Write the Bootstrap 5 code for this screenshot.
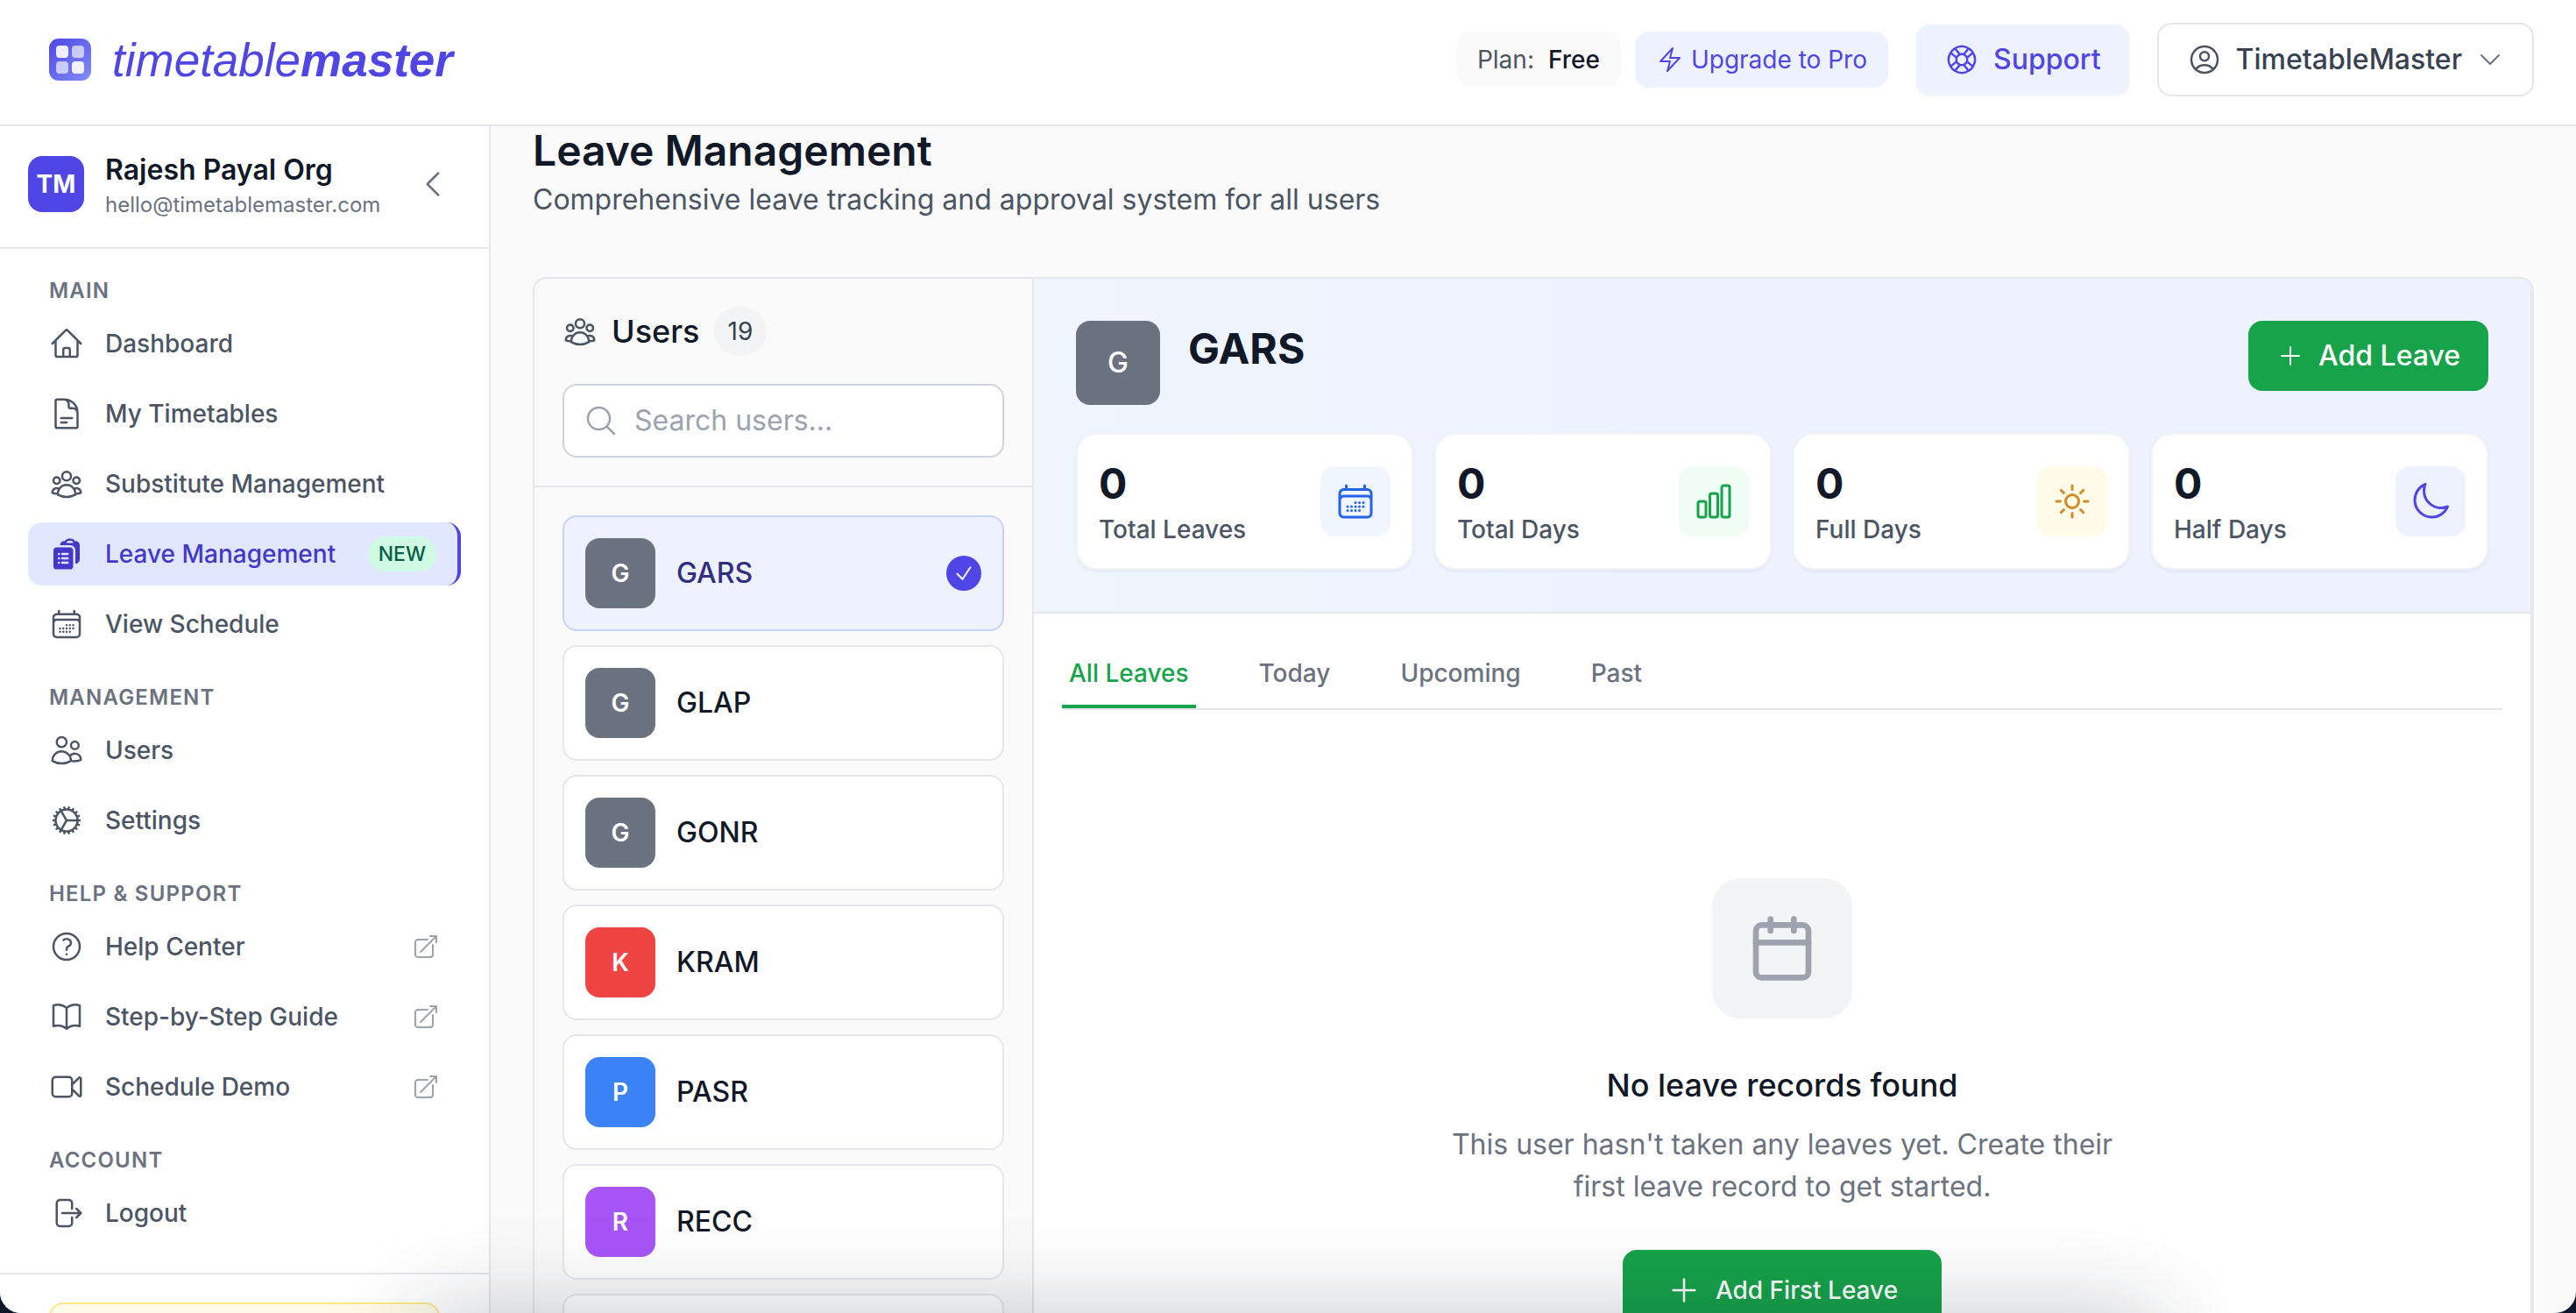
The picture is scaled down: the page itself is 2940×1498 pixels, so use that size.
<!DOCTYPE html>
<html lang="en">
<head>
<meta charset="utf-8">
<meta name="viewport" content="width=device-width, initial-scale=1">
<title>Leave Management - TimetableMaster</title>
<link href="https://cdn.jsdelivr.net/npm/bootstrap@5.3.0/dist/css/bootstrap.min.css" rel="stylesheet">
<style>
  :root { --line: #e5e7eb; --ink: #111827; --slate: #4b5563; --muted: #6b7280; --indigo: #4f46e5; --indigo-soft: #eef2ff; --leaf: #16a34a; }
  body { font-family: Inter, "Liberation Sans", sans-serif; font-size: 28px; line-height: 40px; color: var(--ink); background: #0f172a; }
  h1, h2, h3, p { margin: 0; }
  a { text-decoration: none; color: inherit; }
  button { font: inherit; }
  .ico { fill: none; stroke: currentColor; stroke-width: 1.5; stroke-linecap: round; stroke-linejoin: round; width: 40px; height: 40px; flex: none; }
  .ico-sm { width: 32px; height: 32px; }
  .ico-lg { width: 48px; height: 48px; }
  .ico-xl { width: 80px; height: 80px; stroke-width: 2; }
  .ico-xs { width: 24px; height: 24px; stroke-width: 2; }
  .ico-full { fill: currentColor; stroke: none; }
  .text-lg { font-size: 32px; line-height: 48px; }
  .text-xl { font-size: 36px; line-height: 56px; }
  .text-hero { font-size: 48px; line-height: 56px; font-weight: 600; }
  .tint-slate { color: var(--slate); }
  .tint-muted { color: var(--muted); }
  .gap-32 { gap: 32px; }
  .round { border-radius: 16px; }

  .shell { background: #fafafa; border-radius: 0 0 24px 24px; }
  .topbar { height: 144px; padding: 0 48px 6px 56px; background: #fff; border-bottom: 2px solid var(--line); flex: none; }
  .brand { font-family: "Liberation Sans", Arial, sans-serif; font-style: italic; font-size: 53px; line-height: 56px; padding-top: 2px; color: var(--indigo); }
  .pill { padding: 12px 24px; border: 0; border-radius: 16px; background: #fafafa; }
  .pill-indigo { background: var(--indigo-soft); color: var(--indigo); }
  .support { padding: 16px 32px; border: 0; background: var(--indigo-soft); color: var(--indigo); box-shadow: 0 2px 4px rgba(0,0,0,.05); }
  .account { padding: 16px 32px; border: 2px solid var(--line); background: #fff; color: #374151; }

  .sidebar { width: 560px; flex: none; background: #fff; border-right: 2px solid var(--line); }
  .org { height: 140px; flex: none; padding: 0 32px 6px; border-bottom: 2px solid var(--line); }
  .org-mark { width: 64px; height: 64px; flex: none; background: var(--indigo); color: #fff; font-weight: 700; }
  .org-name { font-size: 32px; line-height: 48px; font-weight: 600; }
  .org-mail { font-size: 24px; line-height: 32px; color: var(--muted); }
  .collapse-btn { border: 0; background: none; padding: 12px; color: var(--muted); }
  .menu { padding: 32px 32px; gap: 32px; }
  .menu-label { padding: 0 24px; font-size: 24px; line-height: 32px; font-weight: 600; letter-spacing: .05em; color: var(--muted); }
  .menu-item { height: 72px; padding: 0 24px; border-radius: 16px; color: var(--slate); font-weight: 500; gap: 24px; }
  .menu-item.on { background: #e0e7ff; color: #4338ca; border-right: 4px solid var(--indigo); }
  .tag-new { background: #d1fae5; color: #065f46; border-radius: 20px; font-size: 23px; padding: 0 12px; }
  .ext { color: #9ca3af; }
  .foot { padding: 32px 56px; border-top: 2px solid var(--line); }
  .trial { height: 200px; background: #fefce8; border: 2px solid #fde68a; }

  .board { border: 2px solid var(--line); border-radius: 16px; margin-top: 64px; overflow: hidden; }
  .people { width: 570px; flex: none; border-right: 2px solid var(--line); }
  .people-head { padding: 32px; border-bottom: 2px solid var(--line); gap: 32px; }
  .count { background: #f3f4f6; color: #374151; border-radius: 28px; padding: 8px 16px; }
  .search { height: 84px; border: 2px solid #d1d5db; background: #fff; padding: 0 22px; color: #9ca3af; }
  .search input { border: 0; outline: 0; background: none; min-width: 0; color: var(--ink); }
  .search input::placeholder { color: #9ca3af; opacity: 1; }
  .people-list { padding: 32px; }
  .person { height: 132px; flex: none; width: 100%; padding: 0 24px; border: 2px solid var(--line); background: #fff; color: var(--ink); font-weight: 500; text-align: left; }
  .person.on { background: var(--indigo-soft); border-color: #c7d2fe; color: #312e81; }
  .face { width: 80px; height: 80px; flex: none; background: #6b7280; color: #fff; font-size: 28px; font-weight: 600; }
  .face-lg { width: 96px; height: 96px; font-size: 32px; font-weight: 500; }
  .face-red { background: #ef4444; }
  .face-blue { background: #3b82f6; }
  .face-purple { background: #a855f7; }
  .tick { width: 40px; height: 40px; background: var(--indigo); color: #fff; }

  .detail { background: #fff; border-right: 2px solid var(--line); }
  .summary { background: linear-gradient(90deg, #eff6ff, #eef2ff 40%); border-bottom: 2px solid var(--line); }
  .stat { background: #fff; border: 2px solid #f3f4f6; border-radius: 24px; padding: 24px; box-shadow: 0 2px 4px rgba(0,0,0,.05); }
  .stat-num { font-size: 48px; line-height: 64px; font-weight: 700; }
  .stat-name { font-weight: 500; color: var(--slate); }
  .stat-ico { width: 80px; height: 80px; }
  .tone-blue { background: #eff6ff; color: #2563eb; }
  .tone-green { background: #f0fdf4; color: var(--leaf); }
  .tone-sun { background: #fefce8; color: #d08a2a; }
  .tone-indigo { background: var(--indigo-soft); color: var(--indigo); }
  .btn-leaf { border: 0; background: var(--leaf); color: #fff; font-weight: 500; padding: 16px 32px; }
  .btn-leaf-lg { padding: 24px 48px; border: 2px solid var(--leaf); }
  .tabs { margin: 32px 32px 0; gap: 64px; border-bottom: 2px solid var(--line); }
  .tab-btn { border: 0; border-bottom: 4px solid transparent; background: none; padding: 16px 8px; font-weight: 500; color: var(--muted); }
  .tab-btn.on { color: var(--leaf); border-color: var(--leaf); }
  .empty { padding-top: 192px; text-align: center; }
  .empty-ico { width: 160px; height: 160px; border-radius: 32px; background: #f3f4f6; color: #9ca3af; margin-bottom: 48px; }
  .empty-text { max-width: 768px; color: var(--muted); margin: 16px 0 48px; }

  /* soft shade rising from the lower edge of the window */
  .shade { position: fixed; left: 16%; right: 16%; top: 100%; height: 200px; border-radius: 40px; box-shadow: 0 0 110px rgba(15,23,42,.24); pointer-events: none; }
</style>
</head>
<body>
<svg class="d-none" xmlns="http://www.w3.org/2000/svg">
  <symbol id="i-home" viewBox="0 0 24 24"><path d="m2.25 12 8.954-8.955c.44-.439 1.152-.439 1.591 0L21.75 12M4.5 9.75v10.125c0 .621.504 1.125 1.125 1.125H9.75v-4.875c0-.621.504-1.125 1.125-1.125h2.25c.621 0 1.125.504 1.125 1.125V21h4.125c.621 0 1.125-.504 1.125-1.125V9.75M8.25 21h8.25"/></symbol>
  <symbol id="i-doc" viewBox="0 0 24 24"><path d="M19.5 14.25v-2.625a3.375 3.375 0 0 0-3.375-3.375h-1.5A1.125 1.125 0 0 1 13.5 7.125v-1.5a3.375 3.375 0 0 0-3.375-3.375H8.25m0 12.75h7.5m-7.5 3H12M10.5 2.25H5.625c-.621 0-1.125.504-1.125 1.125v17.25c0 .621.504 1.125 1.125 1.125h12.75c.621 0 1.125-.504 1.125-1.125V11.25a9 9 0 0 0-9-9Z"/></symbol>
  <symbol id="i-group" viewBox="0 0 24 24"><path d="M18 18.72a9.094 9.094 0 0 0 3.741-.479 3 3 0 0 0-4.682-2.72m.94 3.198.001.031c0 .225-.012.447-.037.666A11.944 11.944 0 0 1 12 21c-2.17 0-4.207-.576-5.963-1.584A6.062 6.062 0 0 1 6 18.719m12 0a5.971 5.971 0 0 0-.941-3.197m0 0A5.995 5.995 0 0 0 12 12.75a5.995 5.995 0 0 0-5.058 2.772m0 0a3 3 0 0 0-4.681 2.72 8.986 8.986 0 0 0 3.74.477m.94-3.197a5.971 5.971 0 0 0-.94 3.197M15 6.75a3 3 0 1 1-6 0 3 3 0 0 1 6 0Zm6 3a2.25 2.25 0 1 1-4.5 0 2.25 2.25 0 0 1 4.5 0Zm-13.5 0a2.25 2.25 0 1 1-4.5 0 2.25 2.25 0 0 1 4.5 0Z"/></symbol>
  <symbol id="i-clip" viewBox="0 0 24 24"><path fill-rule="evenodd" clip-rule="evenodd" d="M7.502 6h7.128A3.375 3.375 0 0 1 18 9.375v9.375a3 3 0 0 0 3-3V6.108c0-1.505-1.125-2.811-2.664-2.94a48.972 48.972 0 0 0-.673-.05A3 3 0 0 0 15 1.5h-1.5a3 3 0 0 0-2.663 1.618c-.225.015-.45.032-.673.05C8.662 3.295 7.554 4.542 7.502 6ZM13.5 3A1.5 1.5 0 0 0 12 4.5h4.5A1.5 1.5 0 0 0 15 3h-1.5Z"/><path fill-rule="evenodd" clip-rule="evenodd" d="M3 9.375C3 8.339 3.84 7.5 4.875 7.5h9.75c1.036 0 1.875.84 1.875 1.875v11.25c0 1.035-.84 1.875-1.875 1.875h-9.75A1.875 1.875 0 0 1 3 20.625V9.375ZM6 12a.75.75 0 0 1 .75-.75h.008a.75.75 0 0 1 .75.75v.008a.75.75 0 0 1-.75.75H6.75a.75.75 0 0 1-.75-.75V12Zm2.25 0a.75.75 0 0 1 .75-.75h3.75a.75.75 0 0 1 0 1.5H9a.75.75 0 0 1-.75-.75ZM6 15a.75.75 0 0 1 .75-.75h.008a.75.75 0 0 1 .75.75v.008a.75.75 0 0 1-.75.75H6.75a.75.75 0 0 1-.75-.75V15Zm2.25 0a.75.75 0 0 1 .75-.75h3.75a.75.75 0 0 1 0 1.5H9a.75.75 0 0 1-.75-.75ZM6 18a.75.75 0 0 1 .75-.75h.008a.75.75 0 0 1 .75.75v.008a.75.75 0 0 1-.75.75H6.75a.75.75 0 0 1-.75-.75V18Zm2.25 0a.75.75 0 0 1 .75-.75h3.75a.75.75 0 0 1 0 1.5H9a.75.75 0 0 1-.75-.75Z"/></symbol>
  <symbol id="i-days" viewBox="0 0 24 24"><path d="M6.75 3v2.25M17.25 3v2.25M3 18.75V7.5a2.25 2.25 0 0 1 2.25-2.25h13.5A2.25 2.25 0 0 1 21 7.5v11.25m-18 0A2.25 2.25 0 0 0 5.25 21h13.5A2.25 2.25 0 0 0 21 18.75m-18 0v-7.5A2.25 2.25 0 0 1 5.25 9h13.5A2.25 2.25 0 0 1 21 11.25v7.5m-9-6h.008v.008H12v-.008ZM12 15h.008v.008H12V15Zm0 2.25h.008v.008H12v-.008ZM9.75 15h.008v.008H9.75V15Zm0 2.25h.008v.008H9.75v-.008ZM7.5 15h.008v.008H7.5V15Zm0 2.25h.008v.008H7.5v-.008Zm6.75-4.5h.008v.008h-.008v-.008Zm0 2.25h.008v.008h-.008V15Zm0 2.25h.008v.008h-.008v-.008Zm2.25-4.5h.008v.008H16.5v-.008Zm0 2.25h.008v.008H16.5V15Z"/></symbol>
  <symbol id="i-users" viewBox="0 0 24 24"><path d="M15 19.128a9.38 9.38 0 0 0 2.625.372 9.337 9.337 0 0 0 4.121-.952 4.125 4.125 0 0 0-7.533-2.493M15 19.128v-.003c0-1.113-.285-2.16-.786-3.07M15 19.128v.106A12.318 12.318 0 0 1 8.624 21c-2.331 0-4.512-.645-6.374-1.766l-.001-.109a6.375 6.375 0 0 1 11.964-3.07M12 6.375a3.375 3.375 0 1 1-6.75 0 3.375 3.375 0 0 1 6.75 0Zm8.25 2.25a2.625 2.625 0 1 1-5.25 0 2.625 2.625 0 0 1 5.25 0Z"/></symbol>
  <symbol id="i-cog" viewBox="0 0 24 24"><path d="M4.5 12a7.5 7.5 0 0 0 15 0m-15 0a7.5 7.5 0 1 1 15 0m-15 0H3m16.5 0H21m-1.5 0H12m-8.457 3.077 1.41-.513m14.095-5.13 1.41-.513M5.106 17.785l1.15-.964m11.49-9.642 1.149-.964M7.501 19.795l.75-1.3m7.5-12.99.75-1.3m-6.063 16.658.26-1.477m2.605-14.772.26-1.477m0 17.726-.26-1.477M10.698 4.614l-.26-1.477M16.5 19.794l-.75-1.299M7.5 4.205 12 12m6.894 5.785-1.149-.964M6.256 7.178l-1.15-.964m15.352 8.864-1.41-.513M4.954 9.435l-1.41-.514M12.002 12l-3.75 6.495"/></symbol>
  <symbol id="i-help" viewBox="0 0 24 24"><path d="M9.879 7.519c1.171-1.025 3.071-1.025 4.242 0 1.172 1.025 1.172 2.687 0 3.712-.203.179-.43.326-.67.442-.745.361-1.45.999-1.45 1.827v.75M21 12a9 9 0 1 1-18 0 9 9 0 0 1 18 0Zm-9 5.25h.008v.008H12v-.008Z"/></symbol>
  <symbol id="i-book" viewBox="0 0 24 24"><path d="M12 6.042A8.967 8.967 0 0 0 6 3.75c-1.052 0-2.062.18-3 .512v14.25A8.987 8.987 0 0 1 6 18c2.305 0 4.408.867 6 2.292m0-14.25a8.966 8.966 0 0 1 6-2.292c1.052 0 2.062.18 3 .512v14.25A8.987 8.987 0 0 0 18 18a8.967 8.967 0 0 0-6 2.292m0-14.25v14.25"/></symbol>
  <symbol id="i-video" viewBox="0 0 24 24"><path d="m15.75 10.5 4.72-4.72a.75.75 0 0 1 1.28.53v11.38a.75.75 0 0 1-1.28.53l-4.72-4.72M4.5 18.75h9a2.25 2.25 0 0 0 2.25-2.25v-9a2.25 2.25 0 0 0-2.25-2.25h-9A2.25 2.25 0 0 0 2.25 7.5v9a2.25 2.25 0 0 0 2.25 2.25Z"/></symbol>
  <symbol id="i-exit" viewBox="0 0 24 24"><path d="M15.75 9V5.25A2.25 2.25 0 0 0 13.5 3h-6a2.25 2.25 0 0 0-2.25 2.25v13.5A2.25 2.25 0 0 0 7.5 21h6a2.25 2.25 0 0 0 2.25-2.25V15m3 0 3-3m0 0-3-3m3 3H9"/></symbol>
  <symbol id="i-ext" viewBox="0 0 24 24"><path d="M13.5 6H5.25A2.25 2.25 0 0 0 3 8.25v10.5A2.25 2.25 0 0 0 5.25 21h10.5A2.25 2.25 0 0 0 18 18.75V10.5m-10.5 6L21 3m0 0h-5.25M21 3v5.25"/></symbol>
  <symbol id="i-bolt" viewBox="0 0 24 24"><path d="m3.75 13.5 10.5-11.25L12 10.5h8.25L9.75 21.75 12 13.5H3.75Z"/></symbol>
  <symbol id="i-buoy" viewBox="0 0 24 24"><path d="M16.712 4.33a9.027 9.027 0 0 1 1.652 1.306c.51.51.944 1.064 1.306 1.652M16.712 4.33l-3.448 4.138m3.448-4.138a9.014 9.014 0 0 0-9.424 0M19.67 7.288l-4.138 3.448m4.138-3.448a9.014 9.014 0 0 1 0 9.424m-4.138-5.976a3.736 3.736 0 0 0-.88-1.388 3.737 3.737 0 0 0-1.388-.88m2.268 2.268a3.765 3.765 0 0 1 0 2.528m-2.268-4.796a3.765 3.765 0 0 0-2.528 0m4.796 4.796c-.181.506-.475.982-.88 1.388a3.736 3.736 0 0 1-1.388.88m2.268-2.268 4.138 3.448m0 0a9.027 9.027 0 0 1-1.306 1.652c-.51.51-1.064.944-1.652 1.306m0 0-3.448-4.138m3.448 4.138a9.014 9.014 0 0 1-9.424 0m5.976-4.138a3.765 3.765 0 0 1-2.528 0m0 0a3.736 3.736 0 0 1-1.388-.88 3.737 3.737 0 0 1-.88-1.388m2.268 2.268L7.288 19.67m0 0a9.024 9.024 0 0 1-1.652-1.306 9.027 9.027 0 0 1-1.306-1.652m0 0 4.138-3.448M4.33 16.712a9.014 9.014 0 0 1 0-9.424m4.138 5.976a3.765 3.765 0 0 1 0-2.528m0 0c.181-.506.475-.982.88-1.388a3.736 3.736 0 0 1 1.388-.88m-2.268 2.268L4.33 7.288m6.406 1.18L7.288 4.33m0 0a9.024 9.024 0 0 0-1.652 1.306A9.025 9.025 0 0 0 4.33 7.288"/></symbol>
  <symbol id="i-user" viewBox="0 0 24 24"><path d="M17.982 18.725A7.488 7.488 0 0 0 12 15.75a7.488 7.488 0 0 0-5.982 2.975m11.963 0a9 9 0 1 0-11.963 0m11.963 0A8.966 8.966 0 0 1 12 21a8.966 8.966 0 0 1-5.982-2.275M15 9.75a3 3 0 1 1-6 0 3 3 0 0 1 6 0Z"/></symbol>
  <symbol id="i-down" viewBox="0 0 24 24"><path d="m19.5 8.25-7.5 7.5-7.5-7.5"/></symbol>
  <symbol id="i-left" viewBox="0 0 24 24"><path d="M15.75 19.5 8.25 12l7.5-7.5"/></symbol>
  <symbol id="i-search" viewBox="0 0 24 24"><path d="m21 21-5.197-5.197m0 0A7.5 7.5 0 1 0 5.196 5.196a7.5 7.5 0 0 0 10.607 10.607Z"/></symbol>
  <symbol id="i-check" viewBox="0 0 24 24"><path d="m4.5 12.75 6 6 9-13.5"/></symbol>
  <symbol id="i-plus" viewBox="0 0 24 24"><path d="M12 4.5v15m7.5-7.5h-15"/></symbol>
  <symbol id="i-bars" viewBox="0 0 24 24"><path d="M3 13.125C3 12.504 3.504 12 4.125 12h2.25c.621 0 1.125.504 1.125 1.125v6.75C7.5 20.496 6.996 21 6.375 21h-2.25A1.125 1.125 0 0 1 3 19.875v-6.75ZM9.75 8.625c0-.621.504-1.125 1.125-1.125h2.25c.621 0 1.125.504 1.125 1.125v11.25c0 .621-.504 1.125-1.125 1.125h-2.25a1.125 1.125 0 0 1-1.125-1.125V8.625ZM16.5 4.125c0-.621.504-1.125 1.125-1.125h2.25C20.496 3 21 3.504 21 4.125v15.75c0 .621-.504 1.125-1.125 1.125h-2.25a1.125 1.125 0 0 1-1.125-1.125V4.125Z"/></symbol>
  <symbol id="i-sun" viewBox="0 0 24 24"><path d="M12 3v2.25m6.364.386-1.591 1.591M21 12h-2.25m-.386 6.364-1.591-1.591M12 18.75V21m-4.773-4.227-1.591 1.591M5.25 12H3m4.227-4.773L5.636 5.636M15.75 12a3.75 3.75 0 1 1-7.5 0 3.75 3.75 0 0 1 7.5 0Z"/></symbol>
  <symbol id="i-moon" viewBox="0 0 24 24"><path d="M21.752 15.002A9.72 9.72 0 0 1 18 15.75c-5.385 0-9.75-4.365-9.75-9.75 0-1.33.266-2.597.748-3.752A9.753 9.753 0 0 0 3 11.25C3 16.635 7.365 21 12.75 21a9.753 9.753 0 0 0 9.002-5.998Z"/></symbol>
  <symbol id="i-cal" viewBox="0 0 24 24"><path d="M8 2v4M16 2v4M3 10h18"/><rect x="3" y="4" width="18" height="18" rx="2"/></symbol>
</svg>

<div class="shell vh-100 d-flex flex-column overflow-hidden">
  <header class="topbar d-flex align-items-center justify-content-between">
    <a href="#" class="d-flex align-items-center gap-4">
      <svg width="48" height="48" viewBox="0 0 48 48" aria-hidden="true">
        <defs><linearGradient id="lg" x1="0" y1="0" x2="1" y2="1"><stop offset="0" stop-color="#4f46e5"/><stop offset="1" stop-color="#818cf8"/></linearGradient></defs>
        <rect width="48" height="48" rx="11" fill="url(#lg)"/>
        <g fill="#fff"><rect x="8" y="8" width="14" height="14" rx="4" opacity=".9"/><rect x="26" y="8" width="14" height="14" rx="4" opacity=".65"/><rect x="8" y="26" width="14" height="14" rx="4" opacity=".65"/><rect x="26" y="26" width="14" height="14" rx="4" opacity=".9"/></g>
      </svg>
      <span class="brand">timetable<b>master</b></span>
    </a>
    <div class="d-flex align-items-center gap-32">
      <div class="d-flex gap-3">
        <div class="pill d-flex gap-3"><span class="tint-slate">Plan:</span><span class="fw-medium">Free</span></div>
        <button type="button" class="pill pill-indigo d-flex align-items-center gap-2"><svg class="ico ico-sm"><use href="#i-bolt"/></svg>Upgrade to Pro</button>
      </div>
      <button type="button" class="support round text-lg fw-medium d-flex align-items-center gap-3"><svg class="ico"><use href="#i-buoy"/></svg>Support</button>
      <button type="button" class="account round text-lg fw-medium d-flex align-items-center gap-3"><svg class="ico tint-slate"><use href="#i-user"/></svg>TimetableMaster<svg class="ico ico-sm tint-muted"><use href="#i-down"/></svg></button>
    </div>
  </header>

  <div class="d-flex flex-grow-1 overflow-hidden">
    <aside class="sidebar d-flex flex-column overflow-hidden">
      <div class="org d-flex align-items-center gap-4">
        <span class="org-mark round d-flex align-items-center justify-content-center">TM</span>
        <div class="flex-grow-1">
          <div class="org-name">Rajesh Payal Org</div>
          <div class="org-mail">hello@timetablemaster.com</div>
        </div>
        <button type="button" class="collapse-btn d-flex" aria-label="Collapse sidebar"><svg class="ico"><use href="#i-left"/></svg></button>
      </div>
      <nav class="menu d-flex flex-column">
        <div class="d-flex flex-column gap-2">
          <div class="menu-label">MAIN</div>
          <a href="#" class="menu-item d-flex align-items-center"><svg class="ico"><use href="#i-home"/></svg>Dashboard</a>
          <a href="#" class="menu-item d-flex align-items-center"><svg class="ico"><use href="#i-doc"/></svg>My Timetables</a>
          <a href="#" class="menu-item d-flex align-items-center"><svg class="ico"><use href="#i-group"/></svg>Substitute Management</a>
          <a href="#" class="menu-item on d-flex align-items-center"><svg class="ico ico-full"><use href="#i-clip"/></svg>Leave Management<span class="tag-new ms-auto">NEW</span></a>
          <a href="#" class="menu-item d-flex align-items-center"><svg class="ico"><use href="#i-days"/></svg>View Schedule</a>
        </div>
        <div class="d-flex flex-column gap-2">
          <div class="menu-label">MANAGEMENT</div>
          <a href="#" class="menu-item d-flex align-items-center"><svg class="ico"><use href="#i-users"/></svg>Users</a>
          <a href="#" class="menu-item d-flex align-items-center"><svg class="ico"><use href="#i-cog"/></svg>Settings</a>
        </div>
        <div class="d-flex flex-column gap-2">
          <div class="menu-label">HELP &amp; SUPPORT</div>
          <a href="#" class="menu-item d-flex align-items-center"><svg class="ico"><use href="#i-help"/></svg>Help Center<svg class="ico ico-sm ext ms-auto"><use href="#i-ext"/></svg></a>
          <a href="#" class="menu-item d-flex align-items-center"><svg class="ico"><use href="#i-book"/></svg>Step-by-Step Guide<svg class="ico ico-sm ext ms-auto"><use href="#i-ext"/></svg></a>
          <a href="#" class="menu-item d-flex align-items-center"><svg class="ico"><use href="#i-video"/></svg>Schedule Demo<svg class="ico ico-sm ext ms-auto"><use href="#i-ext"/></svg></a>
        </div>
        <div class="d-flex flex-column gap-2">
          <div class="menu-label">ACCOUNT</div>
          <a href="#" class="menu-item d-flex align-items-center"><svg class="ico"><use href="#i-exit"/></svg>Logout</a>
        </div>
      </nav>
      <div class="foot"><div class="trial round"></div></div>
    </aside>

    <main class="flex-grow-1 px-5 overflow-hidden">
      <h1 class="text-hero">Leave Management</h1>
      <p class="text-lg tint-slate mt-1">Comprehensive leave tracking and approval system for all users</p>

      <div class="board d-flex">
        <section class="people">
          <div class="people-head d-flex flex-column">
            <div class="d-flex align-items-center gap-3">
              <svg class="ico tint-slate"><use href="#i-group"/></svg>
              <h2 class="text-xl fw-medium">Users</h2>
              <span class="count">19</span>
            </div>
            <div class="search round d-flex align-items-center gap-3">
              <label for="q" class="d-flex" aria-label="Search users"><svg class="ico"><use href="#i-search"/></svg></label>
              <input id="q" type="text" class="text-lg flex-grow-1" placeholder="Search users...">
            </div>
          </div>
          <div class="people-list d-flex flex-column gap-3">
            <button type="button" class="person on round text-lg d-flex align-items-center gap-4"><span class="face round d-flex align-items-center justify-content-center">G</span>GARS<span class="tick rounded-circle ms-auto d-flex align-items-center justify-content-center"><svg class="ico ico-xs"><use href="#i-check"/></svg></span></button>
            <button type="button" class="person round text-lg d-flex align-items-center gap-4"><span class="face round d-flex align-items-center justify-content-center">G</span>GLAP</button>
            <button type="button" class="person round text-lg d-flex align-items-center gap-4"><span class="face round d-flex align-items-center justify-content-center">G</span>GONR</button>
            <button type="button" class="person round text-lg d-flex align-items-center gap-4"><span class="face face-red round d-flex align-items-center justify-content-center">K</span>KRAM</button>
            <button type="button" class="person round text-lg d-flex align-items-center gap-4"><span class="face face-blue round d-flex align-items-center justify-content-center">P</span>PASR</button>
            <button type="button" class="person round text-lg d-flex align-items-center gap-4"><span class="face face-purple round d-flex align-items-center justify-content-center">R</span>RECC</button>
            <div class="person round"></div>
          </div>
        </section>

        <section class="detail flex-grow-1">
          <div class="summary p-5 d-flex flex-column gap-32">
            <div class="d-flex align-items-start gap-32">
              <span class="face face-lg round d-flex align-items-center justify-content-center">G</span>
              <h2 class="text-hero fw-bold flex-grow-1 pt-1">GARS</h2>
              <button type="button" class="btn-leaf round text-lg d-flex align-items-center gap-3"><svg class="ico ico-sm"><use href="#i-plus"/></svg>Add Leave</button>
            </div>
            <div class="row row-cols-4 gx-4">
              <div class="col"><div class="stat d-flex align-items-center justify-content-between"><div><div class="stat-num">0</div><div class="stat-name">Total Leaves</div></div><span class="stat-ico tone-blue round d-flex align-items-center justify-content-center"><svg class="ico ico-lg"><use href="#i-days"/></svg></span></div></div>
              <div class="col"><div class="stat d-flex align-items-center justify-content-between"><div><div class="stat-num">0</div><div class="stat-name">Total Days</div></div><span class="stat-ico tone-green round d-flex align-items-center justify-content-center"><svg class="ico ico-lg"><use href="#i-bars"/></svg></span></div></div>
              <div class="col"><div class="stat d-flex align-items-center justify-content-between"><div><div class="stat-num">0</div><div class="stat-name">Full Days</div></div><span class="stat-ico tone-sun round d-flex align-items-center justify-content-center"><svg class="ico ico-lg"><use href="#i-sun"/></svg></span></div></div>
              <div class="col"><div class="stat d-flex align-items-center justify-content-between"><div><div class="stat-num">0</div><div class="stat-name">Half Days</div></div><span class="stat-ico tone-indigo round d-flex align-items-center justify-content-center"><svg class="ico ico-lg"><use href="#i-moon"/></svg></span></div></div>
            </div>
          </div>
          <div class="tabs d-flex">
            <button type="button" class="tab-btn on">All Leaves</button>
            <button type="button" class="tab-btn">Today</button>
            <button type="button" class="tab-btn">Upcoming</button>
            <button type="button" class="tab-btn">Past</button>
          </div>
          <div class="empty d-flex flex-column align-items-center">
            <span class="empty-ico d-flex align-items-center justify-content-center"><svg class="ico ico-xl"><use href="#i-cal"/></svg></span>
            <h3 class="text-xl fw-medium">No leave records found</h3>
            <p class="empty-text text-lg">This user hasn't taken any leaves yet. Create their first leave record to get started.</p>
            <button type="button" class="btn-leaf btn-leaf-lg round d-flex align-items-center gap-3"><svg class="ico"><use href="#i-plus"/></svg>Add First Leave</button>
          </div>
        </section>
      </div>
    </main>
  </div>
</div>
<div class="shade"></div>
<script src="https://cdn.jsdelivr.net/npm/bootstrap@5.3.0/dist/js/bootstrap.bundle.min.js"></script>
</body>
</html>
